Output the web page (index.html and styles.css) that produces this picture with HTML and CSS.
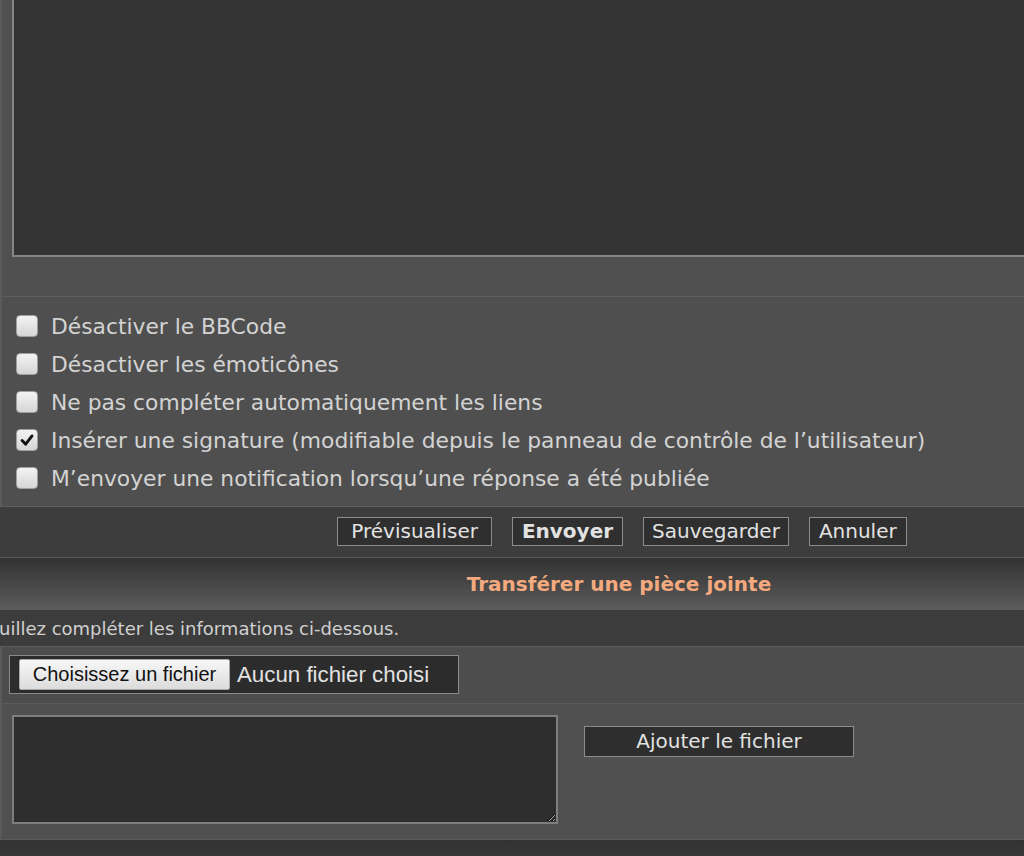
FILE: index.html
```html
<!DOCTYPE html>
<html lang="fr">
<head>
<meta charset="utf-8">
<title>Message</title>
<link rel="stylesheet" href="styles.css">
</head>
<body>
<div class="page">
  <div class="panel editor">
    <textarea class="big-ta" aria-label="Message"></textarea>
  </div>

  <div class="panel options">
    <label class="opt"><span class="cb"></span><span>Désactiver le BBCode</span></label>
    <label class="opt"><span class="cb"></span><span>Désactiver les émoticônes</span></label>
    <label class="opt"><span class="cb"></span><span>Ne pas compléter automatiquement les liens</span></label>
    <label class="opt"><span class="cb checked"><svg viewBox="0 0 21 21" width="19" height="19"><path d="M4.5 10.5 L8.5 14.5 L15.5 5.5" fill="none" stroke="#111" stroke-width="3.2" stroke-linecap="round" stroke-linejoin="round"/></svg></span><span>Insérer une signature (modifiable depuis le panneau de contrôle de l’utilisateur)</span></label>
    <label class="opt"><span class="cb"></span><span>M’envoyer une notification lorsqu’une réponse a été publiée</span></label>
  </div>

  <div class="submit-bar">
    <button class="btn btn-preview">Prévisualiser</button>
    <button class="btn primary">Envoyer</button>
    <button class="btn btn-save">Sauvegarder</button>
    <button class="btn btn-cancel">Annuler</button>
  </div>

  <h3 class="cat-head">Transférer une pièce jointe</h3>
  <p class="hint">Veuillez compléter les informations ci-dessous.</p>

  <div class="panel file-row">
    <div class="file-box">
      <button class="file-btn">Choisissez un fichier</button>
      <span class="file-name">Aucun fichier choisi</span>
    </div>
  </div>

  <div class="panel comment-row">
    <textarea class="small-ta" aria-label="Commentaire"></textarea>
    <button class="btn add-btn">Ajouter le fichier</button>
  </div>

  <div class="next-head"></div>
</div>
</body>
</html>
```

FILE: styles.css
```css
* { box-sizing: border-box; }

html, body {
  margin: 0;
  padding: 0;
  background: #363636;
  overflow: hidden;
}

body {
  width: 1024px;
  height: 856px;
  font-family: "DejaVu Sans", Verdana, sans-serif;
  color: #d3d3d3;
}

.page {
  display: flex;
  flex-direction: column;
}

.panel {
  background: #505050;
  border-left: 2px solid #5a5a5a;
}

/* top editor */
.editor {
  padding: 0 0 39px 10px;
  border-bottom: 1px solid #5d5d5d;
  display: flex;
}

.big-ta {
  display: block;
  flex: 1;
  height: 257px;
  margin: 0;
  background: #333333;
  border: 2px solid #858585;
  border-top: 0;
  border-right: 0;
  resize: none;
  outline: none;
}

/* options */
.options {
  background: #4f4f4f;
  padding: 10px 0 9px 14px;
  border-bottom: 1px solid #5e5e5e;
}

.opt {
  display: flex;
  align-items: center;
  gap: 13px;
  height: 38px;
  font-size: 21.8px;
  white-space: nowrap;
}

.cb {
  width: 22px;
  height: 22px;
  flex: none;
  border: 1px solid #a0a0a0;
  border-radius: 4px;
  background: linear-gradient(#f3f3f3, #d5d5d5);
  display: flex;
  align-items: center;
  justify-content: center;
}

/* submit buttons */
.submit-bar {
  background: #3d3d3d;
  padding: 10px 0 11px 220px;
  display: flex;
  justify-content: center;
  gap: 20px;
  border-bottom: 1px solid #5a5a5a;
}

.btn {
  height: 29px;
  padding: 0 10px;
  margin: 0;
  background: #2f2f2f;
  border: 1px solid #8c8c8c;
  border-radius: 0;
  color: #e2e2e2;
  font-family: "DejaVu Sans", Verdana, sans-serif;
  font-size: 20px;
  line-height: 27px;
}

.btn-preview { padding: 0 13px; }
.btn.primary { font-weight: bold; padding: 0 9px; }
.btn-save { padding: 0 8px; }
.btn-cancel { padding: 0 9px; }

/* heading */
.cat-head {
  margin: 0;
  height: 53px;
  line-height: 53px;
  padding-left: 214px;
  text-align: center;
  background: linear-gradient(#323232, #5c5c5c);
  border-bottom: 1px solid #393939;
  color: #f4aa7e;
  font-size: 20px;
  font-weight: bold;
}

.hint {
  margin: 0;
  height: 36px;
  line-height: 35px;
  background: #3c3c3c;
  border-bottom: 1px solid #5a5a5a;
  font-size: 18px;
  text-indent: -23px;
  white-space: nowrap;
  color: #d0d0d0;
}

/* file input */
.file-row {
  background: #4d4d4d;
  padding: 8px 0 9px 7px;
  border-bottom: 1px solid #5a5a5a;
}

.file-box {
  width: 450px;
  height: 39px;
  border: 1px solid #8a8a8a;
  background: #2c2c2c;
  display: flex;
  align-items: center;
  gap: 7px;
  padding-left: 9px;
}

.file-btn {
  width: 211px;
  height: 31px;
  margin: 0;
  padding: 0;
  background: linear-gradient(#f7f7f7, #dcdcdc);
  border: 1px solid #a8a8a8;
  border-radius: 2px;
  color: #111;
  font-family: "Liberation Sans", Arial, sans-serif;
  font-size: 20px;
}

.file-name {
  font-family: "Liberation Sans", Arial, sans-serif;
  font-size: 22.3px;
  color: #e2e2e2;
  white-space: nowrap;
}

/* comment row */
.comment-row {
  padding: 11px 0 15px 10px;
  display: flex;
  align-items: flex-start;
  gap: 26px;
  border-bottom: 1px solid #5b5b5b;
}

.small-ta {
  display: block;
  width: 546px;
  height: 109px;
  margin: 0;
  background: #2e2e2e;
  border: 2px solid #7e7e7e;
  outline: none;
  resize: both;
}

.add-btn {
  width: 270px;
  height: 31px;
  margin-top: 11px;
  background: #2e2e2e;
}

.next-head {
  height: 30px;
  background: linear-gradient(#333333, #3a3a3a);
}
```
